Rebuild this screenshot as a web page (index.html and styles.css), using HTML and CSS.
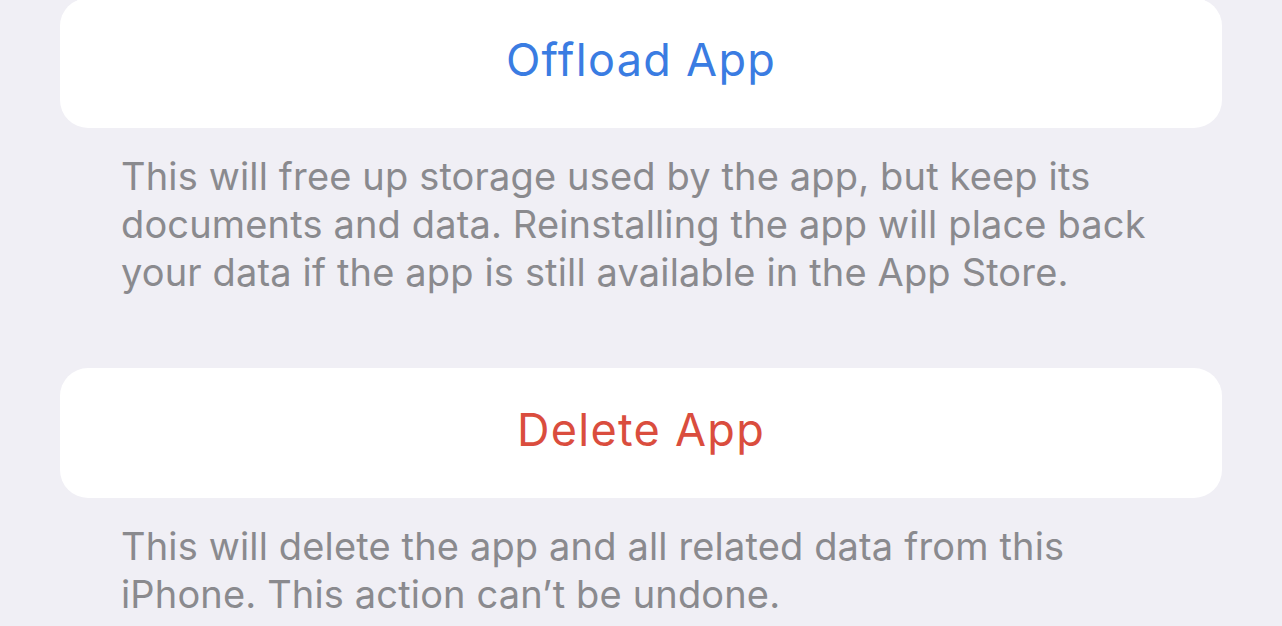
FILE: index.html
```html
<!DOCTYPE html>
<html lang="en">
<head>
  <meta charset="UTF-8" />
  <title>App Storage</title>
  <link rel="stylesheet" href="styles.css">
</head>
<body>

  <div class="page">
    <!-- Offload -->
    <div class="group">
      <button class="cell action-blue">Offload App</button>
      <p class="footer">This will free up storage used by the app, but keep its documents and data. Reinstalling the app will place back your data if the app is still available in the App Store.</p>
    </div>

    <!-- Delete -->
    <div class="group group-delete">
      <button class="cell action-red">Delete App</button>
      <p class="footer">This will delete the app and all related data from this iPhone. This action can&rsquo;t be undone.</p>
    </div>
  </div>

</body>
</html>
```

FILE: styles.css
```css
* {
  box-sizing: border-box;
}
html, body {
  margin: 0;
  padding: 0;
  background-color: #f0eff5;
  font-family: Inter, 'Noto Sans', sans-serif;
  height: 100%;
  width: 100%;
  overflow: hidden;
}
.page {
  padding: 0 60px;
  margin-top: -2px;
}
.group-delete {
  margin-top: 72px;
}
.cell {
  display: block;
  width: 100%;
  height: 130px;
  padding: 0 0 7px;
  border: none;
  border-radius: 28px;
  background: #ffffff;
  font-family: inherit;
  font-size: 45px;
  letter-spacing: 1.3px;
  cursor: pointer;
}
.action-blue {
  color: #3a7ce2;
}
.action-red {
  color: #da4d3e;
}
.footer {
  margin: 0;
  padding: 24px 61px 0;
  font-size: 38px;
  line-height: 48px;
  letter-spacing: 0.15px;
  color: #8a8a8e;
}
```
